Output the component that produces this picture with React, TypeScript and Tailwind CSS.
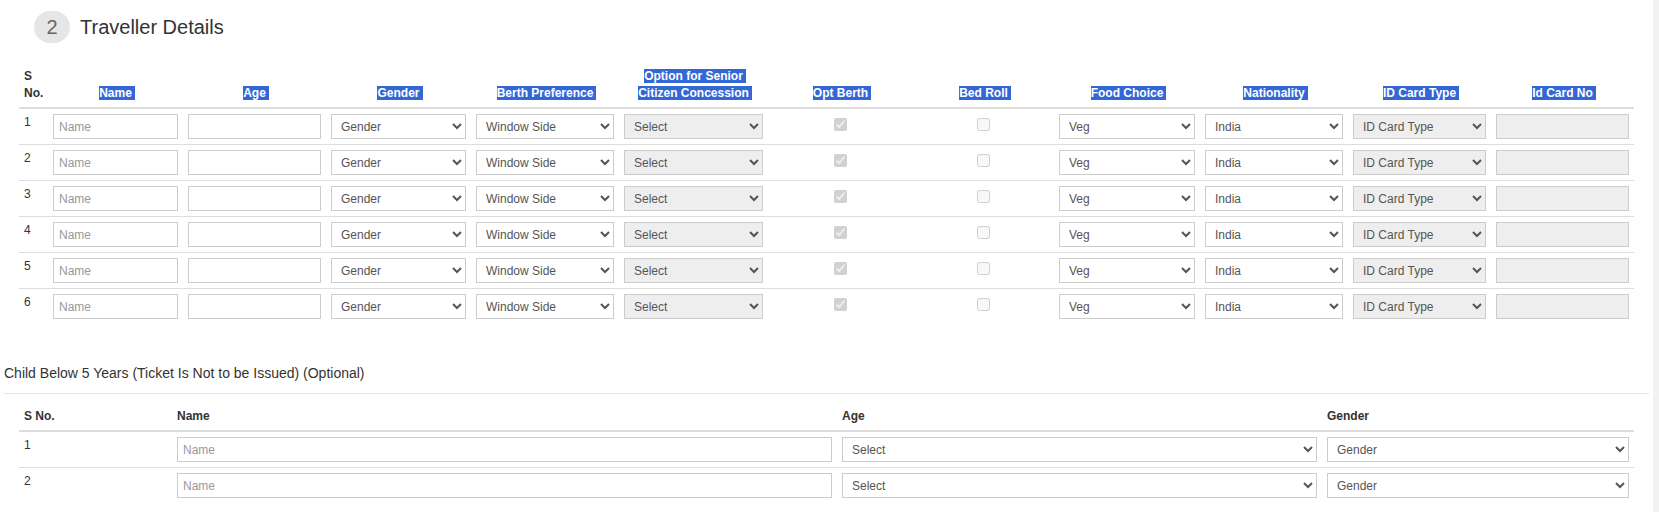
import React from "react";

const mainCols = [
  "w-[29px]",
  "w-[135px]",
  "w-[143px]",
  "w-[145px]",
  "w-[148px]",
  "w-[149px]",
  "w-[145px]",
  "w-[141px]",
  "w-[146px]",
  "w-[148px]",
  "w-[143px]",
  "w-[143px]",
];

const childCols = ["w-[153px]", "w-[665px]", "w-[485px]", "w-[312px]"];

const selectCls =
  "block w-full h-[25px] border border-[#ccc] bg-white pl-[5px] text-[12px] text-[#555] outline-none";
const disabledSelectCls =
  "block w-full h-[25px] border border-[#ccc] bg-[#eee] pl-[5px] text-[12px] text-[#555] outline-none";
const inputCls =
  "block w-full h-[25px] border border-[#ccc] bg-white px-[5px] text-[12px] text-[#555] placeholder:text-[#999] outline-none";

function Hl({ children }: { children: React.ReactNode }) {
  // headers appear text-selected in the screenshot
  return (
    <span className="bg-[#3367d6] pr-[3px] -mr-[3px] text-white">
      {children}
    </span>
  );
}

function Select({
  options,
  disabled,
}: {
  options: string[];
  disabled?: boolean;
}) {
  return (
    <select
      disabled={disabled}
      defaultValue={options[0]}
      className={disabled ? disabledSelectCls : selectCls}
    >
      {options.map((o) => (
        <option key={o}>{o}</option>
      ))}
    </select>
  );
}

const genders = ["Gender", "Male", "Female", "Transgender"];
const berths = [
  "Window Side",
  "Lower",
  "Middle",
  "Upper",
  "Side Lower",
  "Side Upper",
  "No Preference",
];
const foods = ["Veg", "Non Veg", "No Food"];

export default function App() {
  const rows = [1, 2, 3, 4, 5, 6];
  const thCls =
    "border-b-2 border-[#ddd] p-[5px] align-bottom text-center text-[12px] font-bold leading-[17px]";

  return (
    <div className="flex h-[512px] w-full overflow-hidden bg-white font-['Liberation_Sans',Arial,sans-serif] text-[#333]">
      <div className="flex-1 px-[4px]">
        {/* Section heading */}
        <div className="flex h-[63px] items-start pl-[30px] pt-[11px]">
          <div className="flex items-center gap-[10px]">
            <div className="grid h-[32px] w-[36px] place-items-center rounded-full bg-[#e6e6e6] text-[20px] text-[#666]">
              2
            </div>
            <div className="text-[20px] leading-[22px] text-[#333]">
              Traveller Details
            </div>
          </div>
        </div>

        {/* Passenger table */}
        <table className="mx-[15px] w-[1615px] table-fixed border-separate border-spacing-0 text-[12px] leading-[17px]">
          <colgroup>
            {mainCols.map((c, i) => (
              <col key={i} className={c} />
            ))}
          </colgroup>
          <thead>
            <tr>
              <th className={thCls + " text-left"}>S No.</th>
              <th className={thCls}>
                <Hl>Name</Hl>
              </th>
              <th className={thCls}>
                <Hl>Age</Hl>
              </th>
              <th className={thCls}>
                <Hl>Gender</Hl>
              </th>
              <th className={thCls}>
                <Hl>Berth Preference</Hl>
              </th>
              <th className={thCls}>
                <Hl>Option for Senior</Hl>
                <br />
                <Hl>Citizen Concession</Hl>
              </th>
              <th className={thCls}>
                <Hl>Opt Berth</Hl>
              </th>
              <th className={thCls}>
                <Hl>Bed Roll</Hl>
              </th>
              <th className={thCls}>
                <Hl>Food Choice</Hl>
              </th>
              <th className={thCls}>
                <Hl>Nationality</Hl>
              </th>
              <th className={thCls}>
                <Hl>ID Card Type</Hl>
              </th>
              <th className={thCls}>
                <Hl>Id Card No</Hl>
              </th>
            </tr>
          </thead>
          <tbody>
            {rows.map((n, i) => {
              const td =
                (i === 0 ? "" : "border-t border-[#ddd] ") +
                "p-[5px] align-top";
              return (
                <tr key={n}>
                  <td className={td}>{n}</td>
                  <td className={td}>
                    <input className={inputCls} placeholder="Name" />
                  </td>
                  <td className={td}>
                    <input className={inputCls} />
                  </td>
                  <td className={td}>
                    <Select options={genders} />
                  </td>
                  <td className={td}>
                    <Select options={berths} />
                  </td>
                  <td className={td}>
                    <Select options={["Select"]} disabled />
                  </td>
                  <td className={td}>
                    <input
                      type="checkbox"
                      disabled
                      defaultChecked
                      className="mx-auto mt-[4px] block h-[13px] w-[13px]"
                    />
                  </td>
                  <td className={td}>
                    <input
                      type="checkbox"
                      disabled
                      className="mx-auto mt-[4px] block h-[13px] w-[13px]"
                    />
                  </td>
                  <td className={td}>
                    <Select options={foods} />
                  </td>
                  <td className={td}>
                    <Select options={["India", "Other"]} />
                  </td>
                  <td className={td}>
                    <Select options={["ID Card Type"]} disabled />
                  </td>
                  <td className={td}>
                    <input
                      disabled
                      className="block h-[25px] w-full border border-[#ccc] bg-[#eee] px-[5px] text-[12px]"
                    />
                  </td>
                </tr>
              );
            })}
          </tbody>
        </table>

        {/* Infant section */}
        <div className="mt-[39px] text-[14px] leading-[20px] text-[#333]">
          Child Below 5 Years (Ticket Is Not to be Issued) (Optional)
        </div>
        <hr className="mt-[10px] h-0 border-t border-[#e5e5e5]" />

        <table className="mx-[15px] mt-[9px] w-[1615px] table-fixed border-separate border-spacing-0 text-[12px] leading-[17px]">
          <colgroup>
            {childCols.map((c) => (
              <col key={c} className={c} />
            ))}
          </colgroup>
          <thead>
            <tr>
              {["S No.", "Name", "Age", "Gender"].map((h) => (
                <th
                  key={h}
                  className="border-b-2 border-[#ddd] p-[5px] text-left align-bottom font-bold"
                >
                  {h}
                </th>
              ))}
            </tr>
          </thead>
          <tbody>
            {[1, 2].map((n, i) => {
              const td =
                (i === 0 ? "" : "border-t border-[#ddd] ") +
                "p-[5px] align-top";
              return (
                <tr key={n}>
                  <td className={td}>{n}</td>
                  <td className={td}>
                    <input className={inputCls} placeholder="Name" />
                  </td>
                  <td className={td}>
                    <Select options={["Select", "1", "2", "3", "4"]} />
                  </td>
                  <td className={td}>
                    <Select options={genders} />
                  </td>
                </tr>
              );
            })}
          </tbody>
        </table>
      </div>

      {/* right scroll track */}
      <div className="w-[6px] shrink-0 bg-[#f2f2f2]" />
    </div>
  );
}
